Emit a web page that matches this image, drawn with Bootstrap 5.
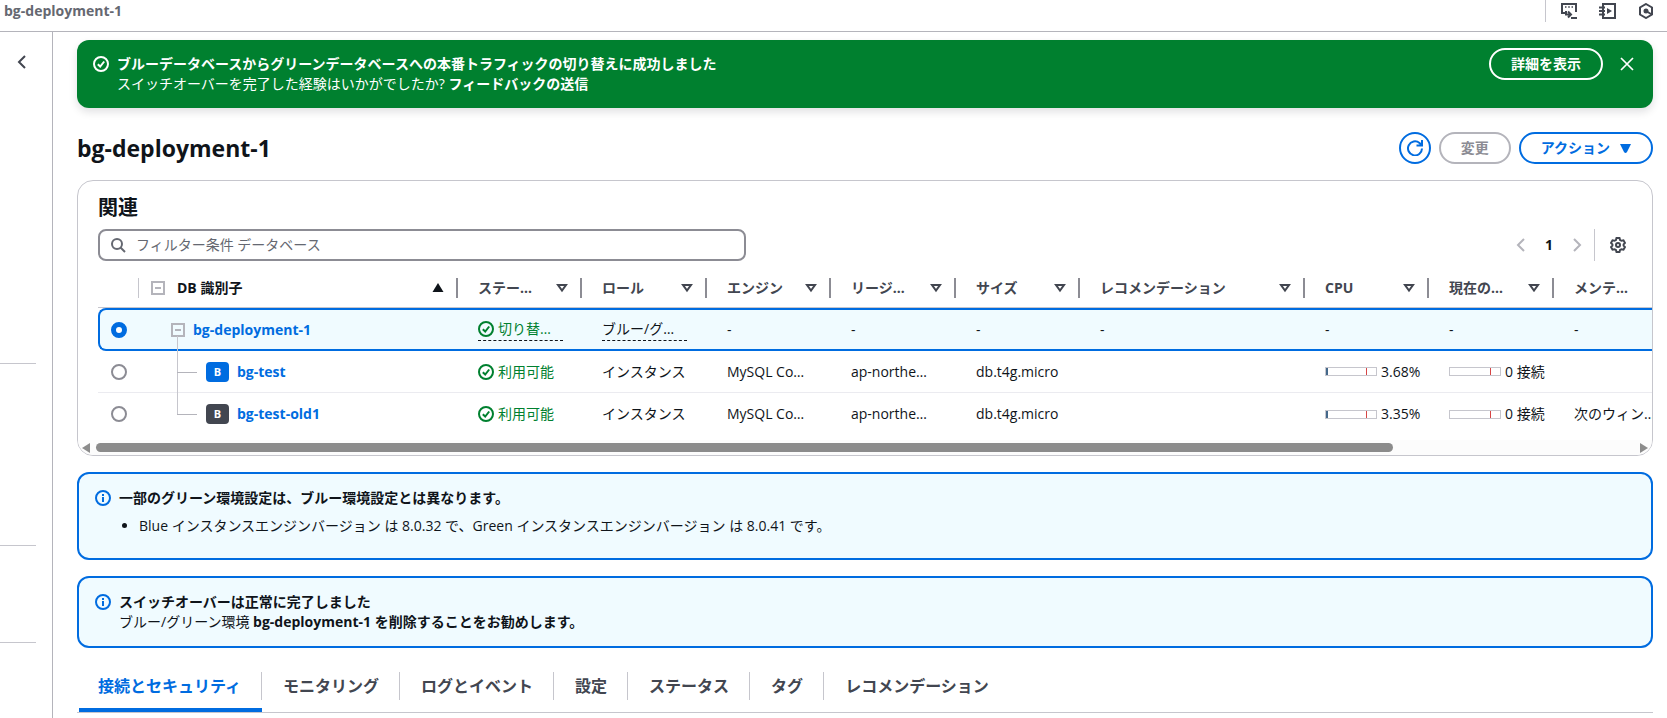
<!DOCTYPE html>
<html lang="ja">
<head>
<meta charset="utf-8">
<meta name="viewport" content="width=device-width, initial-scale=1">
<title>bg-deployment-1</title>
<link href="https://cdn.jsdelivr.net/npm/bootstrap@5.3.0/dist/css/bootstrap.min.css" rel="stylesheet">
<style>
:root{--blue:#006ce0;--ink:#0f141a;--slate:#424650;--grey:#8c8c94;--line:#b4b4bb;--soft:#c6c6cd;--green:#00802f}
body{font-family:"Open Sans","Noto Sans CJK JP",sans-serif;font-size:14px;line-height:20px;color:var(--ink);background:#fff}
svg{display:block;flex:none;fill:none;stroke:currentColor;stroke-width:2}
a{color:var(--blue);text-decoration:none;font-weight:700}
.topbar{height:32px;border-bottom:1px solid var(--line);color:#656871;padding:0 13px 9px 4px}
.tools{color:var(--slate);gap:22px;padding-left:15px;border-left:1px solid var(--soft)}
.plain{border:0;background:none;padding:0;color:inherit}
.shell{min-height:calc(100vh - 32px)}
.side{flex:none;width:53px;border-right:1px solid var(--line);padding-right:16px}
.side hr{margin:0;border-top:1px solid var(--soft);opacity:1}
.side-top{height:331px;padding:22px 0 0 16px;color:var(--slate)}
.side-mid{height:181px}.side-low{height:96px}
.page{flex:1;min-width:0;padding:8px 14px 0 24px}
.flash{background:var(--green);color:#fff;border-radius:12px;min-height:68px;padding:8px 14px 8px 16px;box-shadow:0 4px 8px rgba(0,7,22,.12)}
.flash a{color:#fff}
.flash-text{padding-top:2px}
.pill{height:32px;border:2px solid currentColor;border-radius:20px;background:none;color:var(--blue);font-size:14px;line-height:20px;font-weight:700;padding:0 20px;display:flex;align-items:center;gap:10px}
.pill:disabled{color:var(--grey);border-color:var(--line)}
.round{width:32px;padding:0;justify-content:center}
h1{font-size:23px;line-height:32px;font-weight:700;margin:0}
h2{font-size:20px;line-height:24px;font-weight:700;margin:0}
.panel{border:1px solid var(--soft);border-radius:16px;overflow:hidden}
.panel-head{padding:15px 20px 0}
.tool-row{margin-top:9px}
.search{width:100%;max-width:648px;height:32px;border:2px solid var(--grey);border-radius:8px;padding:0 10px;color:#656871}
.search input{border:0;outline:0;flex:1;min-width:0;padding:0;background:none}
.search input::placeholder{color:#656871;opacity:1}
.pager{color:var(--line)}
.pager strong{color:var(--ink);padding:0 19px}
.gearbox{border-left:1px solid var(--soft);height:32px;margin-left:12px;padding:0 2px 0 15px;color:var(--slate)}
.tbl-wrap{overflow:hidden;padding-left:20px;margin-top:7px}
.dbs{table-layout:fixed;width:1680px;border-collapse:separate;border-spacing:0}
.dbs th,.dbs td{padding:0 0 0 20px;white-space:nowrap;overflow:hidden}
.dbs th{height:40px;border-bottom:1px solid var(--soft);color:var(--slate);font-weight:700}
.dbs th.pick,.dbs td.pick{padding-left:13px}
.dbs th>div{height:20px;border-right:2px solid var(--grey);padding-right:12px}
.dbs th.pick>div{border-right:1px solid var(--soft);padding:0}
.dbs th.db{padding-left:12px;color:var(--ink)}
.dbs td{height:42px;border-bottom:1px solid #ebebf0}
.dbs tr:last-child td{border-bottom:0}
.dbs tr.on td{height:43px;background:#f0fbff;border-top:2px solid var(--blue);border-bottom:2px solid var(--blue)}
.dbs tr.on td:first-child{border-left:2px solid var(--blue);border-radius:8px 0 0 8px;padding-left:11px}
.dbs input{appearance:none;display:block;width:16px;height:16px;margin:0;border:2px solid var(--grey);border-radius:50%;background:#fff}
.dbs input:checked{border:5px solid var(--blue)}
.dbs td.tree{position:relative;overflow:visible;padding-left:32px}
.dbs td.kid{padding-left:67px}
.tree::before{content:"";position:absolute;left:38px;top:0;bottom:-1px;border-left:1px solid var(--soft)}
.on .tree::before{top:26px;bottom:-2px}
tr:last-child .tree::before{bottom:50%}
.kid::after{content:"";position:absolute;left:38px;top:50%;width:20px;border-top:1px solid var(--line)}
.mini{width:14px;height:14px;border:2px solid var(--line);padding:0;background:transparent;display:grid;place-items:center}
.mini::before{content:"";width:6px;height:2px;background:var(--line)}
.tag-b{width:23px;height:20px;border-radius:4px;background:var(--blue);color:#fff;font-size:11px;font-weight:700;text-align:center}
.tag-b.old{background:var(--slate)}
.ok{color:var(--green)}
.hint{display:flex;width:85px;border-bottom:1px dashed var(--ink);line-height:22px}
.gauge{position:relative;width:52px;height:9px;border:1px solid var(--soft);display:block}
.gauge i{display:block;height:7px;background:#44688a}
.gauge::after{content:"";position:absolute;left:40px;top:0;height:7px;border-left:1px solid #d64545}
.bar{height:15px;background:#fcfcfc;padding:0 4px;margin-top:5px;color:#8b8b8b}
.bar svg{fill:currentColor;stroke:none}
.track{flex:1;margin:0 6px}
.thumb{height:9px;border-radius:5px;background:#8b8b8b}
.notice{border:2px solid var(--blue);border-radius:12px;background:#f0fbff;padding:14px 16px;margin-top:16px}
.notice svg{color:var(--blue);margin-top:2px}
.notice ul{margin:8px 0;padding-left:20px}
.tabs{margin-top:24px;border-bottom:1px solid var(--soft);padding-left:2px}
.tabs button{border:0;background:none;padding:0 0 8px;font-size:16px;line-height:28px;font-weight:700;color:var(--slate);border-bottom:4px solid transparent}
.tabs span{display:block;padding:0 20px 0 21px;border-right:1px solid var(--soft)}
.tabs button:last-child span{border:0}
.tabs button:first-child{color:var(--blue);border-color:var(--blue)}
.tabs button:first-child span{padding-left:19px}
</style>
</head>
<body>
<svg width="0" height="0" class="position-absolute">
<symbol id="check" viewBox="0 0 16 16"><circle cx="8" cy="8" r="7"/><path d="M4.8 8.2 7.2 10.5 11.2 5.5"/></symbol>
<symbol id="info" viewBox="0 0 16 16"><circle cx="8" cy="8" r="7"/><path d="M8 4v2M8 7v5"/></symbol>
<symbol id="sort" viewBox="0 0 12 10"><path d="M2 2h8L6 7.500z"/></symbol>
</svg>
<header class="topbar d-flex justify-content-between align-items-stretch">
 <strong class="align-self-center">bg-deployment-1</strong>
 <div class="tools d-flex align-items-center">
  <button class="plain" aria-label="CloudShell"><svg width="16" height="16" viewBox="0 0 16 16"><path d="M4 10H1V1h14v8M10 15h6"/><path d="M4 4h1.500M7.200 4h1.600M10.500 4H12" stroke-width="1.600"/><path d="M5 8v3.500h4M7 8.500l3 3-3 3"/></svg></button>
  <button class="plain" aria-label="ノートブック"><svg width="17" height="16" viewBox="0 0 17 16"><path d="M4 1h12v14H4zM0 4.500h6M0 8h6M0 11.500h6"/><path d="M8 5v6l5-3z" fill="currentColor" stroke="none"/></svg></button>
  <button class="plain" aria-label="サービス"><svg width="16" height="16" viewBox="0 0 16 16"><path d="M8 1l6 3.500v7L8 15l-6-3.500v-7zM8 8l5 3"/><circle cx="8" cy="8" r="1.500" fill="currentColor"/></svg></button>
 </div>
</header>
<div class="shell d-flex">
 <nav class="side" aria-label="メニュー">
  <div class="side-top"><button class="plain" aria-label="戻る"><svg width="12" height="14" viewBox="0 0 12 14"><path d="M9 1 3 7l6 6"/></svg></button></div>
  <hr><div class="side-mid"></div><hr><div class="side-low"></div><hr>
 </nav>
 <main class="page">
  <div class="flash d-flex" role="status">
   <div class="d-flex flex-grow-1 pt-1"><svg class="mt-1 me-2" width="16" height="16"><use href="#check"/></svg>
    <div class="flash-text"><strong>ブルーデータベースからグリーンデータベースへの本番トラフィックの切り替えに成功しました</strong><br>スイッチオーバーを完了した経験はいかがでしたか? <a href="#">フィードバックの送信</a></div></div>
   <button class="pill text-white">詳細を表示</button>
   <button class="plain align-self-start ms-3 ps-0 p-1 mt-1" aria-label="閉じる"><svg width="16" height="16" viewBox="0 0 16 16"><path d="M2 2l12 12M14 2 2 14" stroke-width="1.700"/></svg></button>
  </div>
  <div class="d-flex align-items-center gap-2 mt-4 mb-3">
   <h1 class="flex-grow-1">bg-deployment-1</h1>
   <button class="pill round" aria-label="更新"><svg width="16" height="16" viewBox="0 0 16 16"><path d="M15 8.500A7 7 0 1 1 12.500 3L15 5.200M15 0v5.500H9.500"/></svg></button>
   <button class="pill" disabled>変更</button>
   <button class="pill">アクション<svg width="11" height="9" viewBox="0 0 11 9"><path d="M0 0h11L7 8q-1.500 2-3 0z" fill="currentColor" stroke="none"/></svg></button>
  </div>
  <section class="panel">
   <div class="panel-head">
    <h2>関連</h2>
    <div class="tool-row d-flex justify-content-between align-items-center pe-1">
     <label class="search d-flex align-items-center gap-2"><svg width="18" height="16" viewBox="0 0 18 16"><circle cx="7" cy="7" r="5"/><path d="M10.500 10.500 15 15"/></svg><input type="search" placeholder="フィルター条件 データベース" aria-label="フィルター条件"></label>
     <div class="pager d-flex align-items-center">
      <button class="plain" disabled aria-label="前へ"><svg width="10" height="14" viewBox="0 0 10 14"><path d="M8 1 2 7l6 6"/></svg></button>
      <strong>1</strong>
      <button class="plain" disabled aria-label="次へ"><svg width="10" height="14" viewBox="0 0 10 14"><path d="m2 1 6 6-6 6"/></svg></button>
      <div class="gearbox d-flex align-items-center"><button class="plain" aria-label="設定"><svg width="16" height="16" viewBox="0 0 16 16"><path d="M6.500 1h3l.6 2 1.400.8 2-.5 1.500 2.600L13.600 7.300v1.400l1.400 1.400-1.500 2.600-2-.5-1.400.8-.6 2h-3l-.6-2-1.400-.8-2 .5L1 10.100l1.400-1.400V7.300L1 5.900l1.500-2.600 2 .5L5.900 3z"/><circle cx="8" cy="8" r="2"/></svg></button></div>
     </div>
    </div>
   </div>
   <div class="tbl-wrap">
    <table class="dbs">
     <colgroup><col style="width:41px"><col style="width:319px"><col style="width:124px"><col style="width:125px"><col style="width:124px"><col style="width:125px"><col style="width:124px"><col style="width:225px"><col style="width:124px"><col style="width:125px"><col></colgroup>
     <thead><tr>
      <th class="pick"><div></div></th>
      <th class="db"><div class="d-flex align-items-center"><button class="mini me-2" aria-label="すべて折りたたむ"></button><span class="flex-grow-1 ps-1">DB 識別子</span><svg width="12" height="10" viewBox="0 0 12 10"><path d="M6 0l5.500 9H.5z" fill="currentColor" stroke="none"/></svg></div></th>
      <th><div class="d-flex align-items-center justify-content-between">ステー…<svg width="12" height="10"><use href="#sort"/></svg></div></th>
      <th><div class="d-flex align-items-center justify-content-between">ロール<svg width="12" height="10"><use href="#sort"/></svg></div></th>
      <th><div class="d-flex align-items-center justify-content-between">エンジン<svg width="12" height="10"><use href="#sort"/></svg></div></th>
      <th><div class="d-flex align-items-center justify-content-between">リージ…<svg width="12" height="10"><use href="#sort"/></svg></div></th>
      <th><div class="d-flex align-items-center justify-content-between">サイズ<svg width="12" height="10"><use href="#sort"/></svg></div></th>
      <th><div class="d-flex align-items-center justify-content-between">レコメンデーション<svg width="12" height="10"><use href="#sort"/></svg></div></th>
      <th><div class="d-flex align-items-center justify-content-between">CPU<svg width="12" height="10"><use href="#sort"/></svg></div></th>
      <th><div class="d-flex align-items-center justify-content-between">現在の…<svg width="12" height="10"><use href="#sort"/></svg></div></th>
      <th><div>メンテ…</div></th>
     </tr></thead>
     <tbody>
      <tr class="on"><td class="pick"><input type="radio" name="db" checked aria-label="bg-deployment-1"></td>
       <td class="tree"><div class="d-flex align-items-center"><button class="mini me-2" aria-label="折りたたむ"></button><a href="#">bg-deployment-1</a></div></td>
       <td><span class="hint ok align-items-center gap-1"><svg width="16" height="16"><use href="#check"/></svg>切り替…</span></td>
       <td><span class="hint">ブルー/グ…</span></td><td>-</td><td>-</td><td>-</td><td>-</td><td>-</td><td>-</td><td>-</td></tr>
      <tr><td class="pick"><input type="radio" name="db" aria-label="bg-test"></td>
       <td class="tree kid"><div class="d-flex align-items-center gap-2"><span class="tag-b">B</span><a href="#">bg-test</a></div></td>
       <td><span class="ok d-flex align-items-center gap-1"><svg width="16" height="16"><use href="#check"/></svg>利用可能</span></td>
       <td>インスタンス</td><td>MySQL Co…</td><td>ap-northe…</td><td>db.t4g.micro</td><td></td>
       <td><div class="d-flex align-items-center gap-1"><span class="gauge"><i style="width:3.68%"></i></span>3.68%</div></td>
       <td><div class="d-flex align-items-center gap-1"><span class="gauge"><i style="width:0%"></i></span>0 接続</div></td><td></td></tr>
      <tr><td class="pick"><input type="radio" name="db" aria-label="bg-test-old1"></td>
       <td class="tree kid"><div class="d-flex align-items-center gap-2"><span class="tag-b old">B</span><a href="#">bg-test-old1</a></div></td>
       <td><span class="ok d-flex align-items-center gap-1"><svg width="16" height="16"><use href="#check"/></svg>利用可能</span></td>
       <td>インスタンス</td><td>MySQL Co…</td><td>ap-northe…</td><td>db.t4g.micro</td><td></td>
       <td><div class="d-flex align-items-center gap-1"><span class="gauge"><i style="width:3.35%"></i></span>3.35%</div></td>
       <td><div class="d-flex align-items-center gap-1"><span class="gauge"><i style="width:0%"></i></span>0 接続</div></td><td>次のウィン…</td></tr>
     </tbody>
    </table>
   </div>
   <div class="bar d-flex align-items-center"><svg width="8" height="10" viewBox="0 0 8 10"><path d="M8 0v10L0 5z"/></svg><div class="track"><div class="thumb" style="width:84.300%"></div></div><svg width="8" height="10" viewBox="0 0 8 10"><path d="M0 0v10l8-5z"/></svg></div>
  </section>
  <div class="notice d-flex gap-2"><svg width="16" height="16"><use href="#info"/></svg>
   <div><strong>一部のグリーン環境設定は、ブルー環境設定とは異なります。</strong><ul><li>Blue インスタンスエンジンバージョン は 8.0.32 で、Green インスタンスエンジンバージョン は 8.0.41 です。</li></ul></div></div>
  <div class="notice d-flex gap-2"><svg width="16" height="16"><use href="#info"/></svg>
   <div><strong>スイッチオーバーは正常に完了しました</strong><br>ブルー/グリーン環境 <strong>bg-deployment-1 を削除することをお勧めします。</strong></div></div>
  <div class="tabs d-flex" role="tablist">
   <button role="tab" aria-selected="true"><span>接続とセキュリティ</span></button><button role="tab"><span>モニタリング</span></button><button role="tab"><span>ログとイベント</span></button><button role="tab"><span>設定</span></button><button role="tab"><span>ステータス</span></button><button role="tab"><span>タグ</span></button><button role="tab"><span>レコメンデーション</span></button>
  </div>
 </main>
</div>
<script src="https://cdn.jsdelivr.net/npm/bootstrap@5.3.0/dist/js/bootstrap.bundle.min.js"></script>
</body>
</html>
